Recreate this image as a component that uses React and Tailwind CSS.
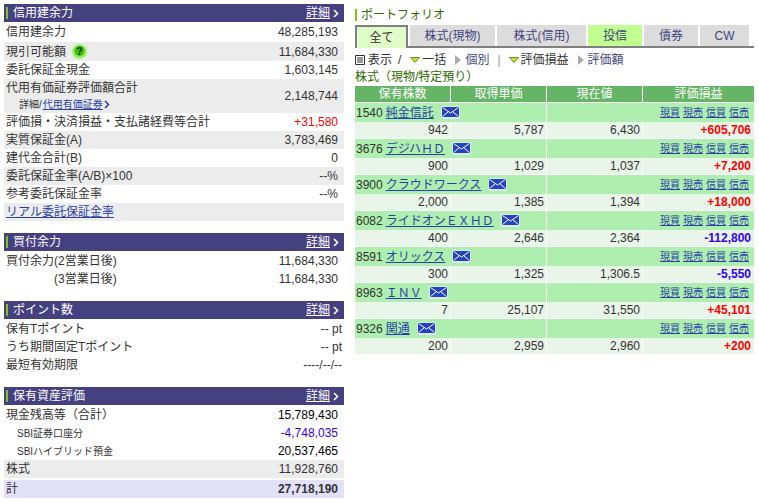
// App.jsx
import React from "react";

const FONT = "font-['Liberation_Sans','Noto_Sans_CJK_JP',sans-serif]";

const Chevron = () => (
  <svg width="6" height="9" viewBox="0 0 6 9" className="ml-[3px]">
    <path d="M1 1l3.5 3.5L1 8" fill="none" stroke="currentColor" strokeWidth="1.6" />
  </svg>
);

const SectionHeader = ({ title }) => (
  <div className="h-[18px] bg-[#454080] flex items-center text-white pl-[2px] pr-[5px]">
    <span className="w-[2px] h-[12px] bg-[#7fc31c] mr-[5px]"></span>
    <span className="flex-1 text-[12px]">{title}</span>
    <span className="text-[12px] underline">詳細</span>
    <Chevron />
  </div>
);

const Row = ({ label, value, gray, small, wide, h = "h-[18px]" }) => (
  <div
    className={`${h} flex items-center justify-between pl-[2px] ${
      wide ? "pr-[2px]" : "pr-[6px]"
    } text-[12px] text-[#333333] ${gray ? "bg-[#ececec]" : ""}`}
  >
    <span className={small ? "pl-[11px] text-[10px]" : ""}>{label}</span>
    <span>{value}</span>
  </div>
);

const HelpIcon = () => (
  <svg width="15" height="15" viewBox="0 0 15 15" className="ml-[6px]">
    <circle cx="7.5" cy="7.5" r="7" fill="#8cf04a" stroke="#a8f078" />
    <circle cx="7.5" cy="7" r="5" fill="#44bb11" />
    <text x="7.5" y="11" textAnchor="middle" fontSize="10" fontWeight="700" fill="#0b3300">?</text>
  </svg>
);

const Mail = () => (
  <svg width="19" height="13" viewBox="0 0 19 13" className="ml-[7px] shrink-0">
    <rect x="0" y="0" width="19" height="13" rx="2" fill="#dfe6ee" />
    <rect x="1" y="1" width="17" height="10" fill="#2344c4" />
    <path d="M1.5 1.5l8 5.5 8-5.5M1.5 10.5l6-5M17.5 10.5l-6-5" fill="none" stroke="#ffffff" strokeWidth="1" />
  </svg>
);

const TriDown = ({ className = "" }) => (
  <svg width="10" height="6" viewBox="0 0 10 6" className={className}>
    <path d="M0.5 0.5h9L5 5.5z" fill="#b4e81a" stroke="#555533" strokeWidth="0.7" />
  </svg>
);

const TriRight = () => (
  <svg width="6" height="10" viewBox="0 0 6 10" className="ml-[9px] mr-[4px]">
    <path d="M0 0l6 5-6 5z" fill="#aaaaaa" />
  </svg>
);

const ListIcon = () => (
  <svg width="10" height="10" viewBox="0 0 10 10" className="mr-[3px]">
    <path d="M0.5 0.5h9v9h-9zM2 3h6M2 5h6M2 7h6" fill="none" stroke="#333333" strokeWidth="1" />
  </svg>
);

const tabs = [
  { name: "株式(現物)", w: "w-[85px]" },
  { name: "株式(信用)", w: "w-[89px]" },
  { name: "投信", w: "w-[54px]", on: true },
  { name: "債券", w: "w-[54px]" },
  { name: "CW", w: "w-[49px]" },
];

const stocks = [
  { code: "1540", name: "純金信託", qty: "942", cost: "5,787", now: "6,430", pl: "+605,706" },
  { code: "3676", name: "デジハＨＤ", qty: "900", cost: "1,029", now: "1,037", pl: "+7,200" },
  { code: "3900", name: "クラウドワークス", qty: "2,000", cost: "1,385", now: "1,394", pl: "+18,000" },
  { code: "6082", name: "ライドオンＥＸＨＤ", qty: "400", cost: "2,646", now: "2,364", pl: "-112,800" },
  { code: "8591", name: "オリックス", qty: "300", cost: "1,325", now: "1,306.5", pl: "-5,550" },
  { code: "8963", name: "ＩＮＶ", qty: "7", cost: "25,107", now: "31,550", pl: "+45,101" },
  { code: "9326", name: "関通", qty: "200", cost: "2,959", now: "2,960", pl: "+200" },
];

const GRID = "grid grid-cols-[95px_95px_95px_1fr] gap-x-[1px]";

const StockRows = ({ s }) => (
  <>
    <div className={`${GRID} h-[19px] text-[12px] text-[#333333]`}>
      <div className="col-span-2 flex items-center pl-[1px] bg-[#aeeeae]">
        <span>{s.code}</span>
        <a className="ml-[3px] text-[#2b3fa8] underline whitespace-nowrap">{s.name}</a>
        <Mail />
      </div>
      <div className="col-span-2 flex items-center justify-end gap-[3px] pr-[5px] bg-[#aeeeae] text-[10px] text-[#2b3fa8] underline">
        <span>現買</span>
        <span>現売</span>
        <span>信買</span>
        <span>信売</span>
      </div>
    </div>
    <div className={`${GRID} h-[16px] mb-[1px] text-[12px] text-[#333333]`}>
      <div className="bg-[#e8f5e8] text-right pr-[2px] leading-[16px]">{s.qty}</div>
      <div className="bg-[#e8f5e8] text-right pr-[2px] leading-[16px]">{s.cost}</div>
      <div className="bg-[#e8f5e8] text-right pr-[2px] leading-[16px]">{s.now}</div>
      <div
        className={`bg-[#e8f5e8] text-right pr-[3px] leading-[16px] font-bold ${
          s.pl.startsWith("+") ? "text-[#ff0000]" : "text-[#3300ff]"
        }`}
      >
        {s.pl}
      </div>
    </div>
  </>
);

export default function App() {
  return (
    <div className={`${FONT} w-[759px] h-[504px] overflow-hidden bg-white flex pt-1 pl-1`}>
      {/* Left */}
      <div className="w-[340px] shrink-0">
        <SectionHeader title="信用建余力" />
        <Row label="信用建余力" value="48,285,193" h="h-[20px]" />
        <Row
          gray
          h="h-[19px]"
          label={
            <span className="flex items-center">
              現引可能額
              <HelpIcon />
            </span>
          }
          value="11,684,330"
        />
        <Row label="委託保証金現金" value="1,603,145" />
        <div className="h-[34px] bg-[#ececec] flex items-center justify-between pl-[2px] pr-[6px] text-[12px] text-[#333333]">
          <div>
            <div className="leading-[17px]">代用有価証券評価額合計</div>
            <div className="pl-[13px] text-[10px] leading-[15px] flex items-center">
              詳細/<a className="ml-[1px] text-[#2b3fa8] underline">代用有価証券</a>
              <span className="text-[#2b3fa8] -ml-[2px]">
                <Chevron />
              </span>
            </div>
          </div>
          <span>2,148,744</span>
        </div>
        <Row label="評価損・決済損益・支払諸経費等合計" value={<span className="text-[#ff0000]">+31,580</span>} />
        <Row gray label="実質保証金(A)" value="3,783,469" />
        <Row label="建代金合計(B)" value="0" />
        <Row gray label="委託保証金率(A/B)×100" value="--%" />
        <Row label="参考委託保証金率" value="--%" />
        <Row gray label={<a className="text-[#2b3fa8] underline">リアル委託保証金率</a>} value="" />

        <div className="mt-3">
          <SectionHeader title="買付余力" />
          <div className="pt-[1px]">
            <Row label="買付余力(2営業日後)" value="11,684,330" />
            <Row label={<span className="pl-[48px]">(3営業日後)</span>} value="11,684,330" />
          </div>
        </div>

        <div className="mt-[13px]">
          <SectionHeader title="ポイント数" />
          <div className="pt-[1px]">
            <Row wide label="保有Tポイント" value="-- pt" />
            <Row wide label="うち期間固定Tポイント" value="-- pt" />
            <Row wide label="最短有効期限" value="----/--/--" />
          </div>
        </div>

        <div className="mt-[13px]">
          <SectionHeader title="保有資産評価" />
          <div className="pt-[1px]">
            <Row label="現金残高等（合計）" value={<span className="text-black">15,789,430</span>} />
            <Row small label="SBI証券口座分" value={<span className="text-[#3300ff]">-4,748,035</span>} />
            <Row small label="SBIハイブリッド預金" value={<span className="text-black">20,537,465</span>} />
            <Row gray label="株式" value="11,928,760" />
            <div className="mt-[2px] h-[18px] bg-[#e3e0fa] flex items-center justify-between pl-[2px] pr-[6px] text-[12px] text-[#333333]">
              <span>計</span>
              <span className="font-bold">27,718,190</span>
            </div>
          </div>
        </div>
      </div>

      {/* Right */}
      <div className="w-[399px] ml-[11px] shrink-0">
        <div className="h-[21px] flex items-center text-[12px] text-[#2f6b00]">
          <span className="w-[2px] h-[12px] bg-[#7fc31c] mr-[4px]"></span>
          ポートフォリオ
        </div>
        <div className="flex gap-[2px] h-[23px] border-b-2 border-[#808080]">
          <div className="w-[53px] h-[23px] bg-[#e0fcc8] border-2 border-b-0 border-[#808080] flex items-center justify-center text-[12px] text-[#333333]">
            全て
          </div>
          {tabs.map((t) => (
            <div
              key={t.name}
              className={`${t.w} h-[21px] flex items-center justify-center text-[12px] text-[#444480] ${
                t.on ? "bg-[#c0ff90]" : "bg-[#dcdcdc]"
              }`}
            >
              {t.name}
            </div>
          ))}
        </div>
        <div className="mt-[4px] h-[16px] flex items-center text-[12px] text-[#333333]">
          <ListIcon />
          <span>表示</span>
          <span className="mx-[6px]">/</span>
          <TriDown className="ml-[3px] mr-[2px]" />
          <span>一括</span>
          <TriRight />
          <span className="text-[#444480]">個別</span>
          <span className="ml-[8px] mr-[5px] text-[#999999]">|</span>
          <TriDown className="ml-[3px] mr-[2px]" />
          <span>評価損益</span>
          <TriRight />
          <span className="text-[#444480]">評価額</span>
        </div>
        <div className="h-[18px] flex items-center text-[12px] text-[#2f6b00]">株式（現物/特定預り）</div>
        <div className={`${GRID} h-[16px] text-[12px] text-white text-center leading-[16px]`}>
          <div className="bg-[#66b566]">保有株数</div>
          <div className="bg-[#66b566]">取得単価</div>
          <div className="bg-[#66b566]">現在値</div>
          <div className="bg-[#66b566]">評価損益</div>
        </div>
        <div className="mt-[1px]">
          {stocks.map((s) => (
            <StockRows key={s.code} s={s} />
          ))}
        </div>
      </div>
    </div>
  );
}
